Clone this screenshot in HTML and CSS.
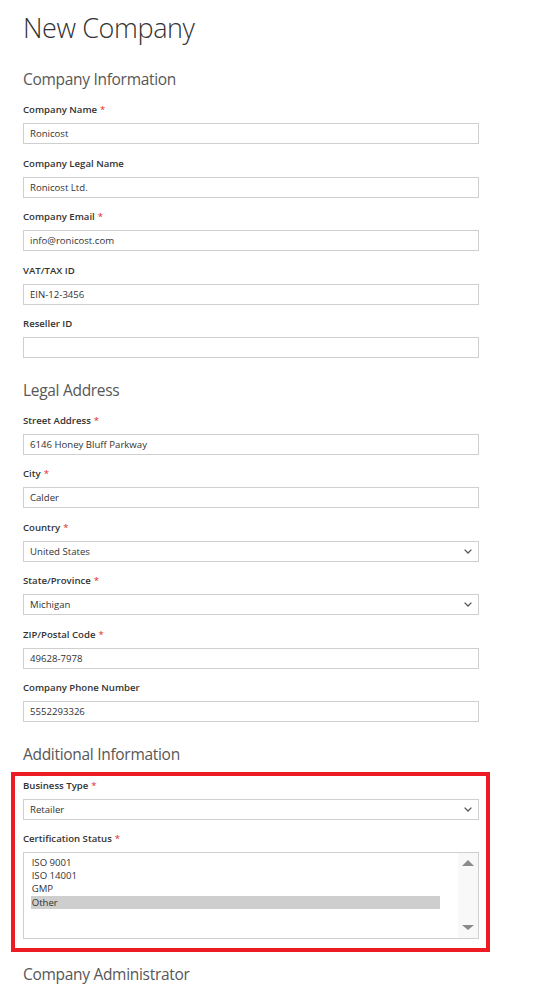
FILE: index.html
```html
<!DOCTYPE html>
<html lang="en">
<head>
    <meta charset="UTF-8">
    <meta name="viewport" content="width=device-width, initial-scale=1.0">
    <title>New Company</title>
    <link rel="stylesheet" href="styles.css">
</head>
<body>
    <div class="page">
        <h1 class="page-title">New Company</h1>

        <form class="company-form">
            <section class="form-section">
                <h2 class="section-title">Company Information</h2>
                <div class="field required">
                    <label for="company_name">Company Name</label>
                    <input class="input-text" id="company_name" type="text" value="Ronicost">
                </div>
                <div class="field">
                    <label for="legal_name">Company Legal Name</label>
                    <input class="input-text" id="legal_name" type="text" value="Ronicost Ltd.">
                </div>
                <div class="field required">
                    <label for="company_email">Company Email</label>
                    <input class="input-text" id="company_email" type="email" value="info@ronicost.com">
                </div>
                <div class="field">
                    <label for="vat_tax_id">VAT/TAX ID</label>
                    <input class="input-text" id="vat_tax_id" type="text" value="EIN-12-3456">
                </div>
                <div class="field">
                    <label for="reseller_id">Reseller ID</label>
                    <input class="input-text" id="reseller_id" type="text" value="">
                </div>
            </section>

            <section class="form-section">
                <h2 class="section-title">Legal Address</h2>
                <div class="field required">
                    <label for="street">Street Address</label>
                    <input class="input-text" id="street" type="text" value="6146 Honey Bluff Parkway">
                </div>
                <div class="field required">
                    <label for="city">City</label>
                    <input class="input-text" id="city" type="text" value="Calder">
                </div>
                <div class="field required">
                    <label for="country">Country</label>
                    <div class="select-wrap">
                        <select class="select" id="country">
                            <option selected>United States</option>
                            <option>Canada</option>
                        </select>
                        <svg class="chevron" width="8" height="5" viewBox="0 0 8 5"><path d="M0.6 0.6 L4 4 L7.4 0.6" fill="none" stroke="#555" stroke-width="1.3"/></svg>
                    </div>
                </div>
                <div class="field required">
                    <label for="region">State/Province</label>
                    <div class="select-wrap">
                        <select class="select" id="region">
                            <option selected>Michigan</option>
                            <option>Ohio</option>
                        </select>
                        <svg class="chevron" width="8" height="5" viewBox="0 0 8 5"><path d="M0.6 0.6 L4 4 L7.4 0.6" fill="none" stroke="#555" stroke-width="1.3"/></svg>
                    </div>
                </div>
                <div class="field required">
                    <label for="postcode">ZIP/Postal Code</label>
                    <input class="input-text" id="postcode" type="text" value="49628-7978">
                </div>
                <div class="field">
                    <label for="telephone">Company Phone Number</label>
                    <input class="input-text" id="telephone" type="text" value="5552293326">
                </div>
            </section>

            <section class="form-section">
                <h2 class="section-title">Additional Information</h2>
                <div class="highlight">
                    <div class="field required">
                        <label for="business_type">Business Type</label>
                        <div class="select-wrap">
                            <select class="select" id="business_type">
                                <option selected>Retailer</option>
                                <option>Wholesaler</option>
                                <option>Distributor</option>
                            </select>
                            <svg class="chevron" width="8" height="5" viewBox="0 0 8 5"><path d="M0.6 0.6 L4 4 L7.4 0.6" fill="none" stroke="#555" stroke-width="1.3"/></svg>
                        </div>
                    </div>
                    <div class="field required">
                        <label>Certification Status</label>
                        <div class="multiselect" role="listbox" aria-multiselectable="true">
                            <div class="options">
                                <div class="option" role="option">ISO 9001</div>
                                <div class="option" role="option">ISO 14001</div>
                                <div class="option" role="option">GMP</div>
                                <div class="option selected" role="option" aria-selected="true">Other</div>
                            </div>
                            <div class="scrollbar">
                                <span class="arrow up"></span>
                                <span class="arrow down"></span>
                            </div>
                        </div>
                    </div>
                </div>
            </section>

            <section class="form-section">
                <h2 class="section-title">Company Administrator</h2>
            </section>
        </form>
    </div>
</body>
</html>
```

FILE: styles.css
```css
body {
    margin: 0;
    background: #fff;
    font-family: "Open Sans", "DejaVu Sans", sans-serif;
    color: #333;
}
.page {
    width: 456px;
    margin-left: 23px;
    padding-bottom: 40px;
}
.page-title {
    margin: 10px 0 0;
    font-size: 27px;
    font-weight: 300;
    line-height: 36px;
    letter-spacing: -0.4px;
    color: #333;
}
.company-form {
    margin-top: 22.8px;
}
.form-section + .form-section {
    margin-top: 21.5px;
}
.section-title {
    margin: 0 0 14.3px;
    font-size: 15.5px;
    font-weight: 400;
    line-height: 20px;
    letter-spacing: -0.3px;
    color: #575757;
}
.field + .field {
    margin-top: 12.5px;
}
.field label {
    display: block;
    margin-bottom: 6px;
    font-size: 9.6px;
    font-weight: 600;
    line-height: 14px;
    color: #333;
}
.required label::after {
    content: "*";
    margin-left: 3px;
    color: #e02b27;
    font-weight: 400;
}
.input-text,
.select {
    display: block;
    width: 100%;
    height: 21px;
    box-sizing: border-box;
    margin: 0;
    padding: 0 6px;
    border: 1px solid #cfcfcf;
    border-radius: 0;
    background: #fff;
    font-family: inherit;
    font-size: 9.6px;
    color: #333;
    outline: none;
}
.select {
    appearance: none;
    -webkit-appearance: none;
    padding-right: 20px;
}
.select-wrap {
    position: relative;
}
.chevron {
    position: absolute;
    right: 7px;
    top: 8px;
    pointer-events: none;
}

/* annotation box around the new fields */
.highlight {
    margin: -6px -11px -9.7px -12px;
    padding: 2.5px 7px 9px 8px;
    border: 4px solid #ed1c24;
}

.multiselect {
    display: flex;
    height: 87px;
    box-sizing: border-box;
    border: 1px solid #cfcfcf;
    background: #fff;
}
.options {
    flex: 1;
    padding: 2.5px 17.6px 0 6.7px;
}
.option {
    padding-left: 1px;
    font-size: 9.6px;
    line-height: 13.3px;
    color: #333;
}
.option.selected {
    background: #cecece;
}
.scrollbar {
    width: 20px;
    display: flex;
    flex-direction: column;
    justify-content: space-between;
    align-items: center;
    padding: 7.3px 0 8.7px;
    background: #f8f8f8;
}
.arrow {
    width: 0;
    height: 0;
    border-left: 6.3px solid transparent;
    border-right: 6.3px solid transparent;
}
.arrow.up {
    border-bottom: 6px solid #8a8a8a;
}
.arrow.down {
    border-top: 5.5px solid #8a8a8a;
}
```
